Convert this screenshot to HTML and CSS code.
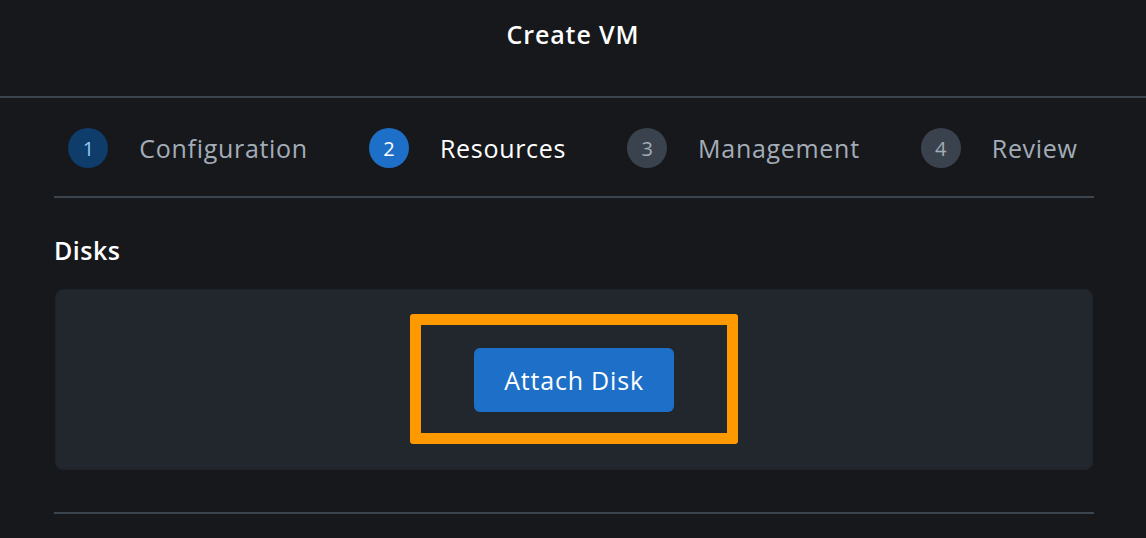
FILE: index.html
```html
<!DOCTYPE html>
<html lang="en">
<head>
<meta charset="utf-8">
<title>Create VM</title>
<link rel="stylesheet" href="styles.css">
</head>
<body>
<header class="header">
  <h1 class="title">Create VM</h1>
</header>
<nav class="steps">
  <div class="step step-done"><span class="num">1</span><span class="label">Configuration</span></div>
  <div class="step step-active"><span class="num">2</span><span class="label">Resources</span></div>
  <div class="step"><span class="num">3</span><span class="label">Management</span></div>
  <div class="step"><span class="num">4</span><span class="label">Review</span></div>
</nav>
<main class="content">
  <div class="rule"></div>
  <h2 class="section-title">Disks</h2>
  <div class="panel">
    <div class="highlight">
      <button class="btn-primary" type="button">Attach Disk</button>
    </div>
  </div>
  <div class="rule rule-bottom"></div>
</main>
</body>
</html>
```
FILE: styles.css
```css
* { box-sizing: border-box; }
html, body {
  margin: 0;
  padding: 0;
  background: #17181c;
  font-family: "Open Sans", Lato, sans-serif;
  color: #ffffff;
}
.header {
  height: 98px;
  border-bottom: 2px solid #3a454f;
  display: flex;
  justify-content: center;
  padding-top: 17px;
}
.title {
  margin: 0;
  font-size: 25px;
  font-weight: 600;
  line-height: 34px;
  color: #ffffff;
  letter-spacing: 0.9px;
}
.steps {
  display: flex;
  justify-content: center;
  gap: 61px;
  padding-top: 30px;
  height: 98px;
}
.step {
  display: flex;
  align-items: center;
  gap: 31px;
  height: 40px;
}
.num {
  width: 40px;
  height: 40px;
  border-radius: 50%;
  background: #3a434d;
  color: #a3adb8;
  display: flex;
  align-items: center;
  justify-content: center;
  font-size: 20px;
}
.label {
  font-size: 25px;
  color: #a3adb8;
  letter-spacing: 0.7px;
}
.step-done .num { background: #0e3c6b; color: #8ecdf5; }
.step-active .num { background: #1d6fc8; color: #ffffff; }
.step-active .label { color: #ffffff; }
.content {
  margin: 0 52px 0 54px;
}
.rule {
  height: 2px;
  background: #3a454f;
}
.section-title {
  margin: 0;
  padding-top: 37px;
  font-size: 25px;
  font-weight: 600;
  line-height: 30px;
  color: #ffffff;
  letter-spacing: 0.5px;
}
.panel {
  margin-top: 24px;
  margin-left: 1px;
  margin-right: 1px;
  height: 181px;
  background: #22262d;
  border: 1px solid #1f2329;
  border-radius: 8px;
  display: flex;
  justify-content: center;
  padding-top: 24px;
}
.highlight {
  width: 328px;
  height: 130px;
  border: 11px solid #ff9900;
  border-radius: 3px;
  display: flex;
  justify-content: center;
  padding-top: 23px;
}
.btn-primary {
  width: 200px;
  height: 64px;
  border: none;
  border-radius: 6px;
  background: #1d6fc8;
  color: #ffffff;
  font-family: "Open Sans", Lato, sans-serif;
  font-size: 25px;
  letter-spacing: 0.8px;
  cursor: pointer;
}
.rule-bottom {
  margin-top: 42px;
}
```
